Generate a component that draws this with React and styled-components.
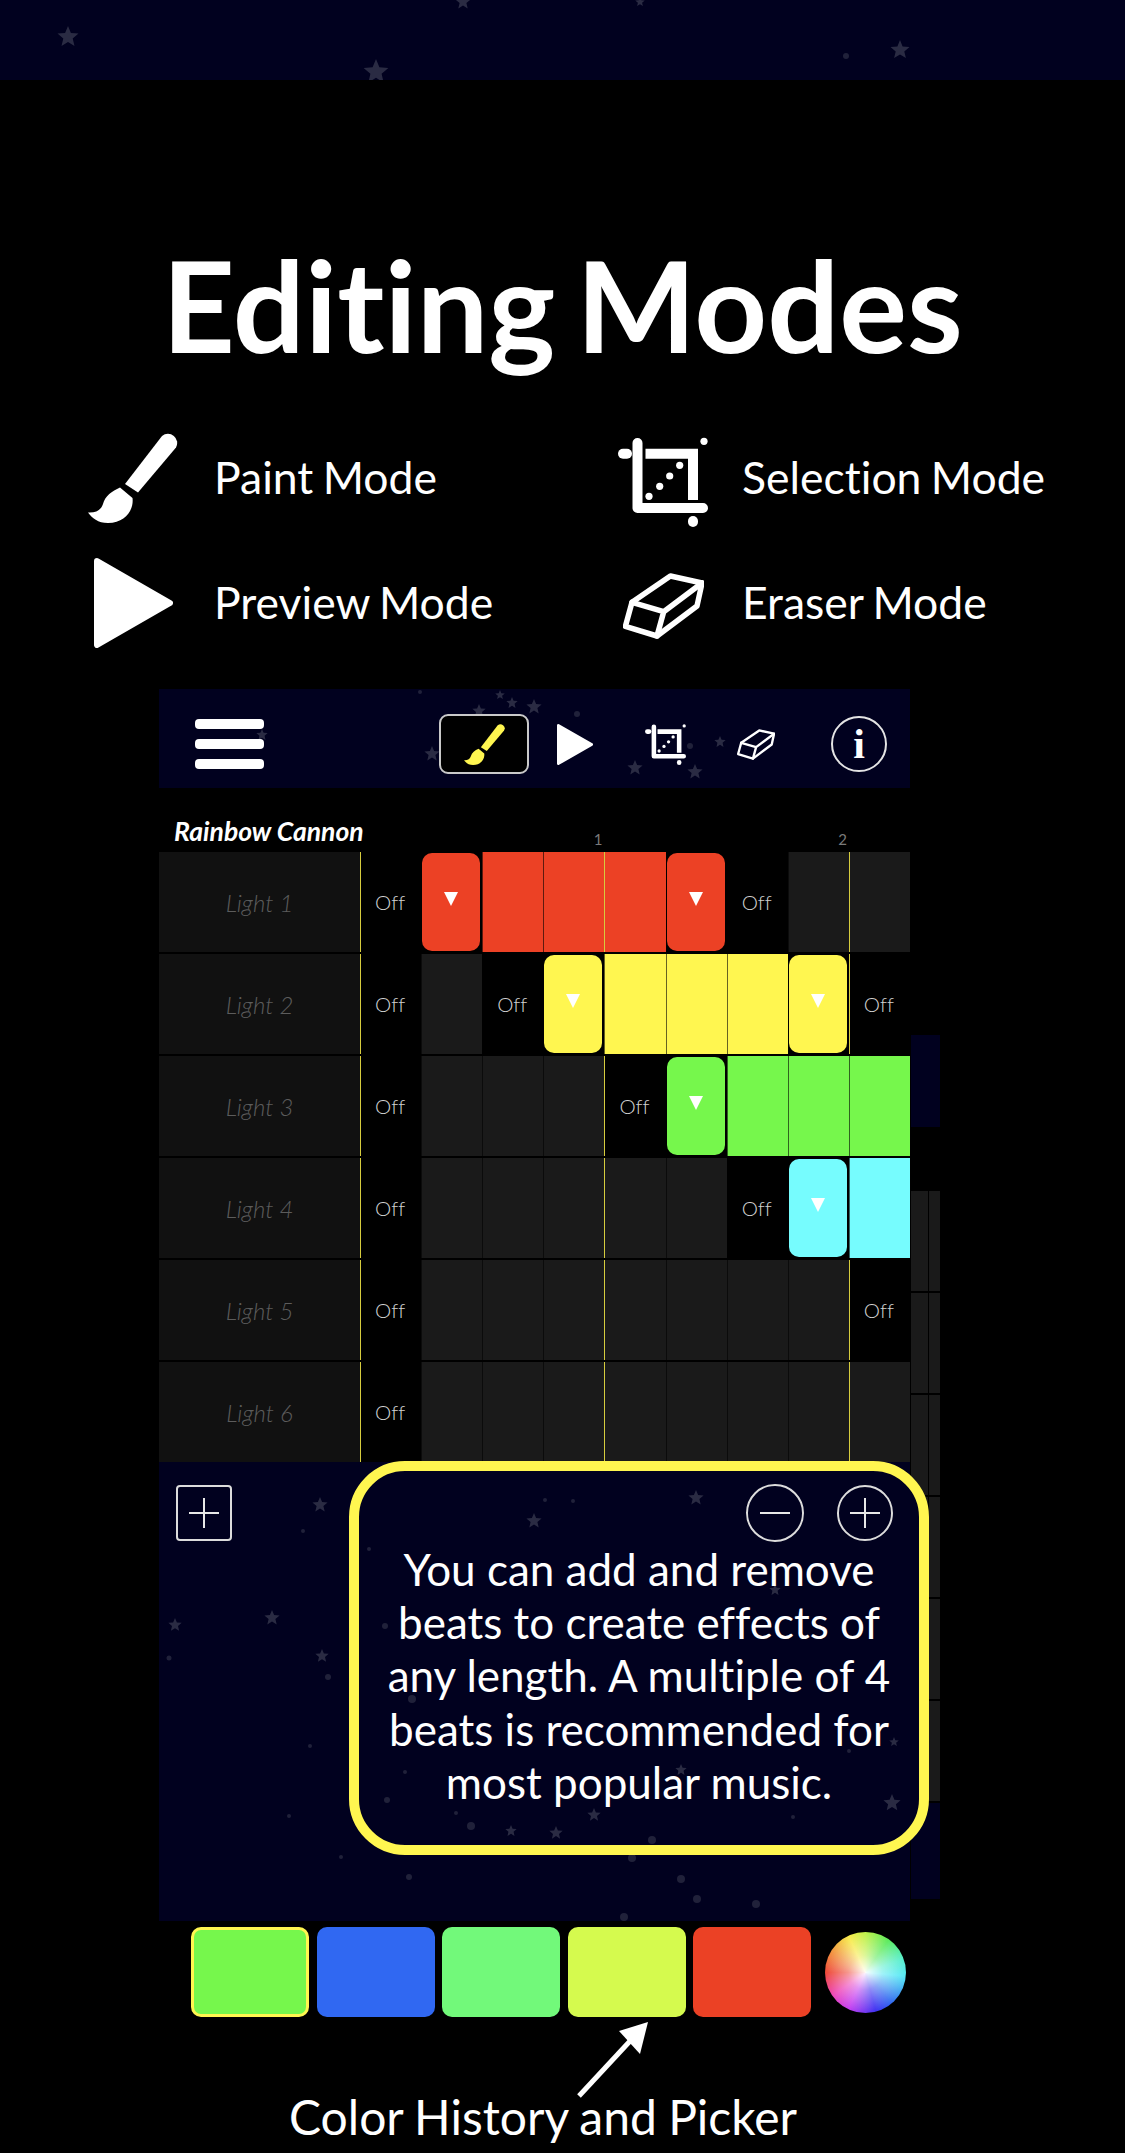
import React from "react";
import styled, { createGlobalStyle } from "styled-components";

const NIGHT = "#01011f";
const YELLOW = "#fff650";

const GlobalStyle = createGlobalStyle`
  html, body {
    margin: 0;
    padding: 0;
    background: #000;
  }
  body {
    font-family: "Lato", "Liberation Sans", sans-serif;
    font-variant-ligatures: none;
    color: #fff;
  }
`;

const Page = styled.div`
  position: relative;
  width: 1125px;
  height: 2153px;
  overflow: hidden;
  background: #000;
`;

const TopBand = styled.div`
  position: relative;
  height: 80px;
  overflow: hidden;
  background: ${NIGHT};
`;

const Title = styled.h1`
  margin: 161px 0 0;
  font-size: 127px;
  line-height: 126px;
  font-weight: 700;
  word-spacing: -10px;
  text-align: center;
`;

const ModeGrid = styled.div`
  display: grid;
  grid-template-columns: 528px 1fr;
  row-gap: 35px;
  margin-top: 66px;
  padding-left: 88px;
`;

const ModeItem = styled.div`
  display: flex;
  align-items: center;
  height: 90px;
`;

const ModeIcon = styled.div`
  flex: none;
  display: flex;
  width: 127px;
  padding-left: ${(p) => p.$left || 0}px;
  padding-top: ${(p) => p.$top || 0}px;
  box-sizing: border-box;
`;

const ModeLabel = styled.span`
  margin-top: -3px;
  margin-left: -1px;
  font-size: 44.5px;
  line-height: 54px;
  word-spacing: -2px;
`;

const Screen = styled.div`
  margin: 41px 0 0 159px;
  width: 751px;
`;

const Header = styled.div`
  position: relative;
  display: flex;
  align-items: center;
  box-sizing: border-box;
  height: 99px;
  padding: 11px 0 0 36px;
  overflow: hidden;
  background: ${NIGHT};
`;

const Burger = styled.div`
  position: relative;
  display: flex;
  flex-direction: column;
  gap: 10px;
  width: 69px;
`;

const BurgerBar = styled.span`
  height: 10px;
  border-radius: 4px;
  background: #fff;
`;

const PaintButton = styled.div`
  position: relative;
  display: flex;
  align-items: center;
  justify-content: center;
  box-sizing: border-box;
  width: 90px;
  height: 60px;
  margin-left: 175px;
  border: 2px solid #c9c9c9;
  border-radius: 9px;
  background: #000;
  color: ${YELLOW};
`;

const ToolSlot = styled.div`
  position: relative;
  display: flex;
  margin-left: ${(p) => p.$gap}px;
  color: #fff;
`;

const InfoButton = styled.div`
  position: relative;
  display: flex;
  align-items: center;
  justify-content: center;
  box-sizing: border-box;
  width: 56px;
  height: 56px;
  margin-left: 56px;
  border: 2px solid #e4e4e4;
  border-radius: 50%;
  font-family: "Liberation Serif", serif;
  font-weight: 700;
  font-size: 42px;
  line-height: 1;
`;

const Ruler = styled.div`
  display: grid;
  grid-template-columns: 201px repeat(9, 1fr);
  height: 64px;
`;

const SongName = styled.div`
  padding: 28px 0 0 15px;
  font-size: 26.5px;
  line-height: 30px;
  font-weight: 700;
  font-style: italic;
  white-space: nowrap;
`;

const BeatNumber = styled.div`
  grid-column: ${(p) => p.$col};
  padding: 42px 2px 0 0;
  font-size: 15px;
  line-height: 18px;
  text-align: right;
  color: #7a7a7a;
`;

const Rows = styled.div`
  display: flex;
  flex-direction: column;
  gap: 2px;
`;

const Row = styled.div`
  display: grid;
  grid-template-columns: 201px repeat(9, 1fr);
  height: 100px;
`;

const RowLabel = styled.div`
  display: flex;
  align-items: center;
  justify-content: center;
  background: #111;
  color: #5c5c5c;
  font-size: 24px;
  font-weight: 300;
  font-style: italic;
`;

const Cell = styled.div`
  display: flex;
  align-items: center;
  justify-content: center;
  box-sizing: border-box;
  border-left: 1px solid ${(p) => (p.$bar ? "#d6cc3e" : p.$line || "transparent")};
  background: ${(p) => p.$fill || "#000"};
`;

const OffText = styled.span`
  margin-left: -2px;
  font-size: 20.5px;
  font-weight: 300;
  color: #d0d0d0;
`;

const Cap = styled.div`
  display: flex;
  align-items: center;
  justify-content: center;
  width: 58px;
  height: 98px;
  margin-left: -2px;
  border-radius: 10px;
  background: ${(p) => p.$fill};
  &::after {
    content: "";
    margin-bottom: 6px;
    border-left: 7.5px solid transparent;
    border-right: 7.5px solid transparent;
    border-top: 14px solid #fff;
  }
`;

const Footer = styled.div`
  position: relative;
  height: 459px;
  background: ${NIGHT};
`;

const AddLight = styled.div`
  position: absolute;
  top: 23px;
  left: 17px;
  display: flex;
  align-items: center;
  justify-content: center;
  box-sizing: border-box;
  width: 56px;
  height: 56px;
  border: 2px solid #dcdcdc;
  border-radius: 4px;
`;

const Callout = styled.div`
  position: absolute;
  top: -1px;
  left: 190px;
  box-sizing: border-box;
  width: 580px;
  height: 394px;
  border: 10px solid ${YELLOW};
  border-radius: 56px;
  overflow: hidden;
  background: ${NIGHT};
`;

const BeatButtons = styled.div`
  position: relative;
  display: flex;
  justify-content: flex-end;
  align-items: center;
  gap: 33px;
  padding: 13px 26px 0 0;
`;

const RoundButton = styled.div`
  display: flex;
  align-items: center;
  justify-content: center;
  box-sizing: border-box;
  width: ${(p) => p.$size}px;
  height: ${(p) => p.$size}px;
  border: 2px solid #dcdcdc;
  border-radius: 50%;
`;

const CalloutText = styled.p`
  position: relative;
  margin: 1px 0 0;
  font-size: 44px;
  line-height: 53.2px;
  text-align: center;
  white-space: nowrap;
`;

const Swatches = styled.div`
  display: flex;
  align-items: center;
  gap: 7.5px;
  margin: 6px 0 0 191px;
`;

const Swatch = styled.div`
  box-sizing: border-box;
  width: 118px;
  height: 90px;
  border-radius: 10px;
  background: ${(p) => p.$color};
  border: ${(p) => (p.$active ? `3px solid ${YELLOW}` : "none")};
`;

const Wheel = styled.div`
  width: 81px;
  height: 81px;
  margin-left: 6px;
  border-radius: 50%;
  background:
    radial-gradient(circle, rgba(255, 255, 255, 0.95) 0%, rgba(255, 255, 255, 0.45) 30%, rgba(255, 255, 255, 0) 72%),
    conic-gradient(#bdf044 0deg, #58ea58 35deg, #55eecb 70deg, #52e8f5 95deg, #2f66f0 140deg, #3a2cf0 165deg, #c63cf0 205deg, #ee44b8 235deg, #ee4433 270deg, #f29a3c 305deg, #f7ea48 335deg, #bdf044 360deg);
`;

const ArrowSlot = styled.div`
  display: flex;
  margin: 3px 0 0 577px;
`;

const Caption = styled.div`
  padding-left: 289px;
  font-size: 48px;
  line-height: 38px;
  word-spacing: -1px;
  white-space: nowrap;
`;

const GhostStrip = styled.div`
  position: absolute;
  left: 911px;
  top: ${(p) => p.$top}px;
  display: grid;
  grid-template-columns: 17px 11px;
  column-gap: 1px;
  row-gap: 2px;
`;

const GhostBlue = styled.div`
  position: absolute;
  left: 911px;
  top: ${(p) => p.$top}px;
  width: 29px;
  height: ${(p) => p.$height}px;
  background: ${NIGHT};
`;

const GhostCell = styled.div`
  height: 100px;
  background: #1a1a1a;
`;

const Sky = styled.svg`
  position: absolute;
  top: 0;
  left: 0;
  width: 100%;
  height: 100%;
  filter: blur(0.7px);
`;

function starPoints(x, y, r) {
  const pts = [];
  for (let i = 0; i < 10; i++) {
    const radius = i % 2 === 0 ? r : r * 0.45;
    const a = (Math.PI / 5) * i - Math.PI / 2;
    pts.push(`${(x + radius * Math.cos(a)).toFixed(1)},${(y + radius * Math.sin(a)).toFixed(1)}`);
  }
  return pts.join(" ");
}

// stars: [x, y, r], small ones are plain dots
function StarField({ stars }) {
  return (
    <Sky>
      {stars.map(([x, y, r]) =>
        r > 4 ? (
          <polygon key={`${x}-${y}`} points={starPoints(x, y, r)} fill="#2a2b43" />
        ) : (
          <circle key={`${x}-${y}`} cx={x} cy={y} r={r} fill="#20213a" />
        )
      )}
    </Sky>
  );
}

function BrushIcon({ size }) {
  return (
    <svg width={size} height={size} viewBox="0 0 90 90" fill="currentColor">
      <path d="M37 51 L74 3 A9.2 9.2 0 0 1 88 14.5 L50 59.5 Z" />
      <path d="M32 54.5 L44.5 65 C46 76 38 90 20 90 C10 90 4 85 0 79.5 C8 80 13 77 15 71 C17 63 24 58 32 54.5 Z" />
    </svg>
  );
}

function PlayIcon({ width, height }) {
  return (
    <svg width={width} height={height} viewBox="0 0 79 90" fill="#fff" stroke="#fff" strokeWidth="6" strokeLinejoin="round">
      <path d="M3 3 L76 45 L3 87 Z" />
    </svg>
  );
}

function CropIcon({ size }) {
  return (
    <svg width={size} height={size} viewBox="0 0 90 90" fill="none" stroke="#fff" strokeWidth="10">
      <path d="M19.5 6 V71 H85" strokeLinecap="round" strokeLinejoin="round" />
      <path d="M27.5 16.7 H75 V63" />
      <path d="M5 16.7 H9" strokeLinecap="round" />
      <path d="M75 84 V85" strokeLinecap="round" />
      <g fill="#fff" stroke="none">
        <circle cx="86" cy="4.3" r="3.6" />
        <circle cx="61.7" cy="28.3" r="3.6" />
        <circle cx="51.7" cy="39" r="3.6" />
        <circle cx="41.7" cy="49.3" r="3.6" />
        <circle cx="31" cy="59.3" r="3.6" />
      </g>
    </svg>
  );
}

function EraserIcon({ width, height, weight }) {
  return (
    <svg width={width} height={height} viewBox="0 0 81 66" fill="none" stroke="#fff" strokeWidth={weight} strokeLinejoin="round" strokeLinecap="round">
      <path d="M9 29.3 L47.4 3 L79 10 L74 33 L34 63 L2.4 53.3 Z" />
      <path d="M9 29.3 L40.7 38.7 L79 10 M40.7 38.7 L34 63" />
    </svg>
  );
}

function CrossIcon({ horizontalOnly }) {
  return (
    <svg width="32" height="32" viewBox="0 0 32 32" stroke="#e8e8e8" strokeWidth="2">
      <path d="M1 16 H31" />
      {!horizontalOnly && <path d="M16 1 V31" />}
    </svg>
  );
}

const MODES = [
  { label: "Paint Mode", left: 0, top: 0, icon: <BrushIcon size={90} /> },
  { label: "Selection Mode", left: 2, top: 8, icon: <CropIcon size={90} /> },
  { label: "Preview Mode", left: 6, top: 0, icon: <PlayIcon width={79} height={90} /> },
  { label: "Eraser Mode", left: 7, top: 6, icon: <EraserIcon width={81} height={66} weight={5.5} /> },
];

const RED = "#ec4125";
const LEMON = "#fff650";
const GREEN = "#76f74c";
const CYAN = "#76fcfe";

// o = off, e = empty, c = cap with the fade marker, s = solid
const LIGHTS = [
  { name: "Light 1", color: RED, cells: "ocssscoee" },
  { name: "Light 2", color: LEMON, cells: "oeocsssco" },
  { name: "Light 3", color: GREEN, cells: "oeeeocsss" },
  { name: "Light 4", color: CYAN, cells: "oeeeeeocs" },
  { name: "Light 5", color: CYAN, cells: "oeeeeeeeo" },
  { name: "Light 6", color: CYAN, cells: "oeeeeeeee" },
];

const SWATCHES = ["#76f74c", "#3068f2", "#72f97a", "#d5fa4e", "#eb4125"];

const TOP_STARS = [[68, 37, 11], [376, 72, 13], [463, 2, 8], [640, 2, 5], [846, 56, 3], [900, 50, 10]];

const HEADER_STARS = [
  [341, 6, 5], [353, 14, 6], [375, 18, 8], [320, 22, 7], [418, 25, 3], [273, 65, 8],
  [476, 79, 8], [536, 83, 8], [561, 53, 6], [531, 57, 3], [103, 46, 6], [261, 3, 2],
];

const FOOTER_STARS = [
  [161, 43, 8], [113, 156, 8], [16, 163, 7], [163, 194, 7], [144, 69, 2], [10, 196, 2.5],
  [169, 215, 3], [151, 284, 2], [130, 354, 2], [182, 395, 2], [250, 415, 3], [473, 396, 4],
  [522, 417, 4], [538, 437, 4], [597, 442, 4], [465, 455, 4],
];

// relative to the inner edge of the callout
const CALLOUT_STARS = [
  [175, 50, 8], [186, 29, 2], [214, 30, 2], [337, 27, 8], [416, 119, 6], [322, 299, 6],
  [235, 344, 7], [197, 362, 7], [152, 360, 6], [112, 355, 4], [293, 369, 4], [533, 332, 9],
  [535, 271, 5], [490, 280, 2], [434, 346, 2], [97, 342, 2], [28, 329, 3], [46, 301, 2],
  [10, 78, 2], [26, 155, 3], [53, 228, 4],
];

function LightRow({ light }) {
  return (
    <Row>
      <RowLabel>{light.name}</RowLabel>
      {light.cells.split("").map((kind, i) => {
        const bar = i % 4 === 0;
        if (kind === "o") {
          return (
            <Cell key={i} $bar={bar}>
              <OffText>Off</OffText>
            </Cell>
          );
        }
        if (kind === "e") {
          return <Cell key={i} $bar={bar} $fill="#1a1a1a" $line="#0b0b0b" />;
        }
        if (kind === "c") {
          return (
            <Cell key={i} $bar={bar}>
              <Cap $fill={light.color} />
            </Cell>
          );
        }
        return <Cell key={i} $bar={bar && light.color === RED} $fill={light.color} $line="rgba(0, 0, 0, 0.6)" />;
      })}
    </Row>
  );
}

export default function App() {
  return (
    <Page>
      <GlobalStyle />
      <TopBand>
        <StarField stars={TOP_STARS} />
      </TopBand>

      <Title>Editing Modes</Title>

      <ModeGrid>
        {MODES.map((mode) => (
          <ModeItem key={mode.label}>
            <ModeIcon $left={mode.left} $top={mode.top}>
              {mode.icon}
            </ModeIcon>
            <ModeLabel>{mode.label}</ModeLabel>
          </ModeItem>
        ))}
      </ModeGrid>

      <GhostBlue $top={1035} $height={92} />
      <GhostStrip $top={1191}>
        {Array.from({ length: 12 }, (_, i) => (
          <GhostCell key={i} />
        ))}
      </GhostStrip>
      <GhostBlue $top={1803} $height={96} />

      <Screen>
        <Header>
          <StarField stars={HEADER_STARS} />
          <Burger>
            <BurgerBar />
            <BurgerBar />
            <BurgerBar />
          </Burger>
          <PaintButton>
            <BrushIcon size={41} />
          </PaintButton>
          <ToolSlot $gap={28}>
            <PlayIcon width={36} height={41} />
          </ToolSlot>
          <ToolSlot $gap={52}>
            <CropIcon size={41} />
          </ToolSlot>
          <ToolSlot $gap={51}>
            <EraserIcon width={38} height={31} weight={5} />
          </ToolSlot>
          <InfoButton>i</InfoButton>
        </Header>

        <Ruler>
          <SongName>Rainbow Cannon</SongName>
          <BeatNumber $col={5}>1</BeatNumber>
          <BeatNumber $col={9}>2</BeatNumber>
        </Ruler>

        <Rows>
          {LIGHTS.map((light) => (
            <LightRow key={light.name} light={light} />
          ))}
        </Rows>

        <Footer>
          <StarField stars={FOOTER_STARS} />
          <AddLight>
            <CrossIcon />
          </AddLight>
          <Callout>
            <StarField stars={CALLOUT_STARS} />
            <BeatButtons>
              <RoundButton $size={58}>
                <CrossIcon horizontalOnly />
              </RoundButton>
              <RoundButton $size={56}>
                <CrossIcon />
              </RoundButton>
            </BeatButtons>
            <CalloutText>
              You can add and remove
              <br />
              beats to create effects of
              <br />
              any length. A multiple of 4
              <br />
              beats is recommended for
              <br />
              most popular music.
            </CalloutText>
          </Callout>
        </Footer>
      </Screen>

      <Swatches>
        {SWATCHES.map((color, i) => (
          <Swatch key={color} $color={color} $active={i === 0} />
        ))}
        <Wheel />
      </Swatches>

      <ArrowSlot>
        <svg width="76" height="78" viewBox="0 0 76 78" fill="#fff">
          <path d="M2 76 L54 20" stroke="#fff" strokeWidth="5" />
          <path d="M71 2 L42 11 L63 34 Z" />
        </svg>
      </ArrowSlot>
      <Caption>Color History and Picker</Caption>
    </Page>
  );
}
